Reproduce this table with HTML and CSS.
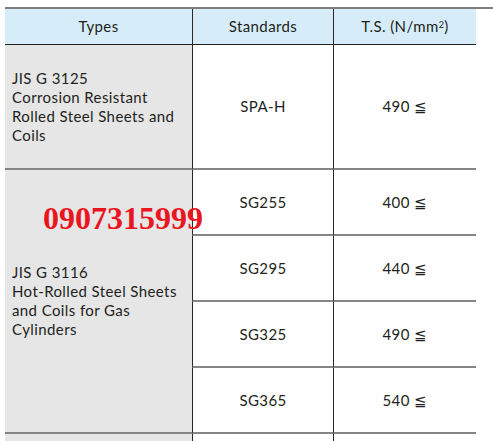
FILE: index.html
```html
<!DOCTYPE html>
<html>
<head>
<meta charset="utf-8">
<link rel="stylesheet" href="styles.css">
</head>
<body>
<div class="page">
  <div class="table">
    <div class="cell head c1">Types</div>
    <div class="cell head c2">Standards</div>
    <div class="cell head c3">T.S. (N/mm<sup>2</sup>)</div>

    <div class="cell type r1">JIS G 3125<br>Corrosion Resistant<br>Rolled Steel Sheets and<br>Coils</div>
    <div class="cell val r1 c2">SPA-H</div>
    <div class="cell val r1 c3">490 ≦</div>

    <div class="cell type span4">JIS G 3116<br>Hot-Rolled Steel Sheets<br>and Coils for Gas<br>Cylinders</div>
    <div class="cell val sub c2">SG255</div>
    <div class="cell val sub c3">400 ≦</div>
    <div class="cell val sub c2">SG295</div>
    <div class="cell val sub c3">440 ≦</div>
    <div class="cell val sub c2">SG325</div>
    <div class="cell val sub c3">490 ≦</div>
    <div class="cell val sub c2">SG365</div>
    <div class="cell val sub c3">540 ≦</div>

    <div class="cell type tail"></div>
    <div class="cell val tail c2"></div>
    <div class="cell val tail c3"></div>
  </div>
  <div class="phone">0907315999</div>
</div>
</body>
</html>
```
FILE: styles.css
```css
html, body {
  margin: 0;
  padding: 0;
  background: #ffffff;
  overflow: hidden;
}

.page {
  position: relative;
  width: 493px;
  height: 441px;
  overflow: hidden;
  padding: 7px 0 0 5px;
  box-sizing: border-box;
}

.table {
  display: grid;
  grid-template-columns: 187px 141px 143px;
  grid-template-rows: 36px 125px 66px 66px 66px 66px 40px;
  border-top: 2px solid #7d7d7d;
  font-family: Lato, "Noto Sans", sans-serif;
  font-size: 15px;
  letter-spacing: 0.4px;
  line-height: 19px;
  color: #231f20;
}

.cell {
  box-sizing: border-box;
  display: flex;
  align-items: center;
  border-bottom: 2px solid #868484;
}

.c2, .c3 {
  border-left: 1px solid #2e2626;
}

.head {
  background: #d6edf9;
  justify-content: center;
  border-bottom: 1px solid #222222;
}

.head sup {
  font-size: 9px;
  line-height: 0;
  position: relative;
  top: -2px;
}

.type {
  background: #e6e6e6;
  padding-left: 7px;
}

.span4 {
  grid-row: span 4;
}

.val {
  justify-content: center;
  background: #ffffff;
}

.tail {
  border-bottom: none;
}

.phone {
  position: absolute;
  left: 43px;
  top: 202px;
  font-family: "Liberation Serif", "Times New Roman", serif;
  font-weight: bold;
  font-size: 32px;
  letter-spacing: 0;
  line-height: 1;
  color: #ea1520;
}
```
